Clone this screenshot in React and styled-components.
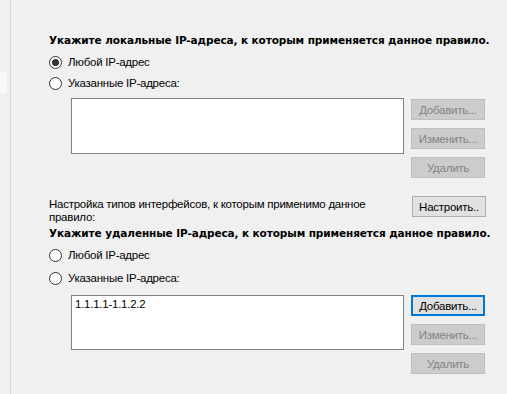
import React from "react";
import styled, { createGlobalStyle } from "styled-components";

const Global = createGlobalStyle`
  html, body { margin: 0; padding: 0; background: #f0f0f0; }
  body { width: 507px; height: 394px; overflow: hidden; }
`;

const Page = styled.div`
  display: flex;
  width: 507px;
  height: 394px;
  background: #f0f0f0;
  font-family: "Liberation Sans", Arial, sans-serif;
  font-size: 11.5px;
  letter-spacing: -0.25px;
  color: #000;
`;

const SideStrip = styled.div`
  width: 10px;
  flex: none;
  border-right: 1px solid #d9d9d9;
  display: flex;
  flex-direction: column;
`;

const SidePatch = styled.div`
  margin-top: 72px;
  width: 7px;
  height: 21px;
  background: #f8f8f8;
`;

const Content = styled.div`
  flex: 1;
  display: flex;
  flex-direction: column;
  padding: 33px 0 0 38px;
`;

const Heading = styled.div`
  font-family: "DejaVu Sans", Tahoma, sans-serif;
  font-weight: bold;
  font-size: 10.5px;
  letter-spacing: -0.1px;
  line-height: 14px;
  height: 14px;
  white-space: nowrap;
  margin-top: ${(p) => p.$mt || 0}px;
`;

const RadioRow = styled.label`
  display: flex;
  align-items: center;
  height: 20px;
  gap: 6px;
  margin-top: ${(p) => p.$mt || 0}px;
  white-space: nowrap;
`;

const RadioCircle = styled.span`
  width: 11px;
  height: 11px;
  border: 1px solid #333;
  border-radius: 50%;
  background: #fff;
  display: flex;
  align-items: center;
  justify-content: center;
  flex: none;
  &::after {
    content: "";
    width: 7px;
    height: 7px;
    border-radius: 50%;
    background: ${(p) => (p.$checked ? "#333" : "transparent")};
  }
`;

const GroupRow = styled.div`
  display: flex;
  gap: 7px;
  margin-top: ${(p) => p.$mt || 0}px;
  margin-left: 22px;
`;

const ListBox = styled.div`
  width: 333px;
  height: ${(p) => p.$h}px;
  border: 1px solid #828282;
  background: #fff;
  padding: 2px 3px;
  box-sizing: border-box;
  line-height: 13px;
  flex: none;
`;

const ButtonColumn = styled.div`
  display: flex;
  flex-direction: column;
  gap: 8px;
  padding-top: ${(p) => p.$pt || 0}px;
`;

const Button = styled.button`
  width: 74px;
  height: 21px;
  box-sizing: border-box;
  padding: 0;
  font-family: "Liberation Sans", Arial, sans-serif;
  font-size: 11.5px;
  letter-spacing: -0.25px;
  border: ${(p) => (p.$focus ? "2px solid #0078d7" : "1px solid " + (p.disabled ? "#bfbfbf" : "#adadad"))};
  background: ${(p) => (p.disabled ? "#cccccc" : "#e1e1e1")};
  color: ${(p) => (p.disabled ? "#838383" : "#000")};
  white-space: nowrap;
`;

const SettingsRow = styled.div`
  display: flex;
  justify-content: space-between;
  align-items: flex-start;
  margin-top: 18px;
  width: 437px;
`;

const SettingsLabel = styled.div`
  width: 330px;
  line-height: 13px;
  margin-top: 2px;
`;

function Radio({ checked, children, mt }) {
  return (
    <RadioRow $mt={mt}>
      <RadioCircle $checked={checked} />
      <span>{children}</span>
    </RadioRow>
  );
}

function Buttons({ focus, pt }) {
  return (
    <ButtonColumn $pt={pt}>
      <Button $focus={focus} disabled={!focus}>Добавить...</Button>
      <Button disabled>Изменить...</Button>
      <Button disabled>Удалить</Button>
    </ButtonColumn>
  );
}

export default function App() {
  return (
    <Page>
      <Global />
      <SideStrip>
        <SidePatch />
      </SideStrip>
      <Content>
        <Heading>Укажите локальные IP-адреса, к которым применяется данное правило.</Heading>
        <Radio checked mt={5}>Любой IP-адрес</Radio>
        <Radio mt={1}>Указанные IP-адреса:</Radio>
        <GroupRow $mt={5}>
          <ListBox $h={56} />
          <Buttons pt={1} />
        </GroupRow>
        <SettingsRow>
          <SettingsLabel>Настройка типов интерфейсов, к которым применимо данное правило:</SettingsLabel>
          <Button>Настроить..</Button>
        </SettingsRow>
        <Heading $mt={2}>Укажите удаленные IP-адреса, к которым применяется данное правило.</Heading>
        <Radio mt={5}>Любой IP-адрес</Radio>
        <Radio mt={3}>Указанные IP-адреса:</Radio>
        <GroupRow $mt={7}>
          <ListBox $h={55}>1.1.1.1-1.1.2.2</ListBox>
          <Buttons focus />
        </GroupRow>
      </Content>
    </Page>
  );
}
